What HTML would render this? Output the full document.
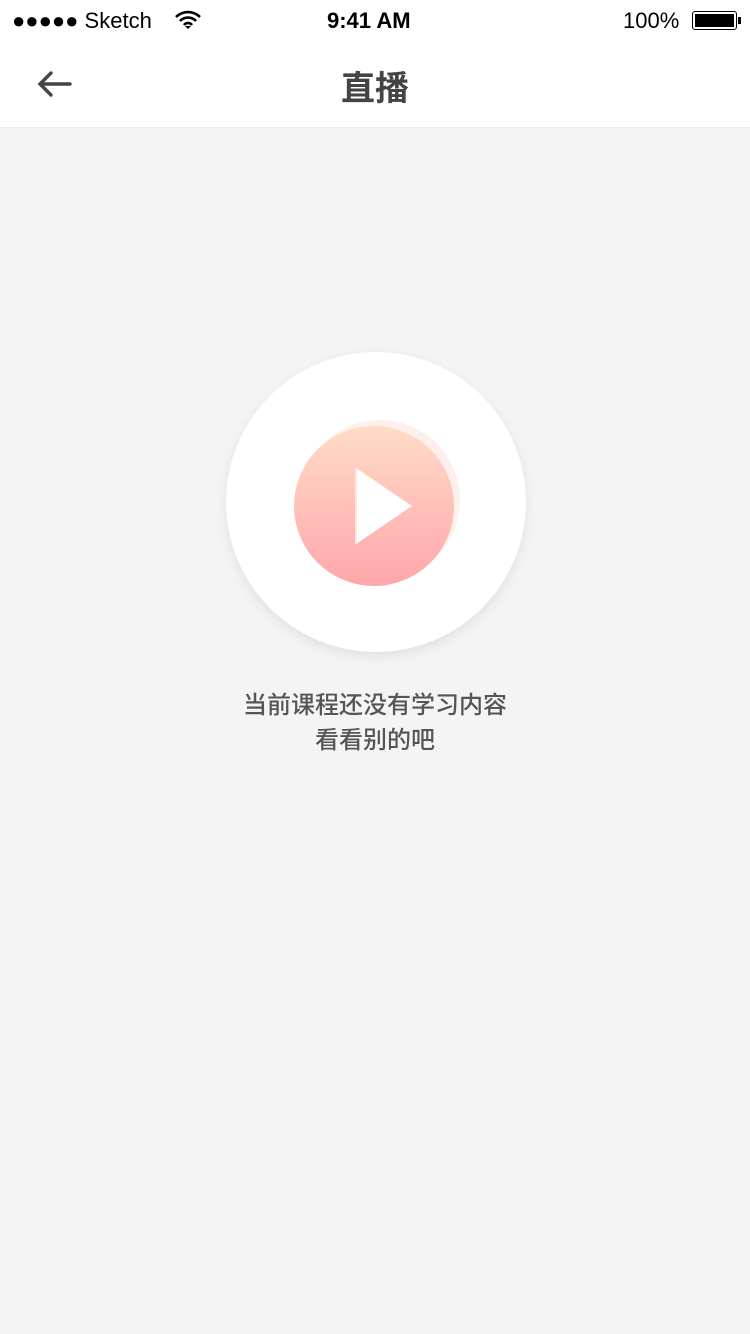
<!DOCTYPE html>
<html><head><meta charset="utf-8"><style>
*{margin:0;padding:0;box-sizing:border-box}
body{width:750px;height:1334px;background:#f4f4f4;font-family:"Liberation Sans","Noto Sans CJK SC",sans-serif;position:relative;overflow:hidden}
.top{position:absolute;left:0;top:0;width:750px;height:128px;background:#fff;border-bottom:1px solid #ececec}
.sb{position:absolute;top:8px;font-size:22px;color:#000}
.title{position:absolute;top:61px;left:0;width:750px;text-align:center;font-size:34px;color:#444;font-weight:600}
.big{position:absolute;left:226px;top:352px;width:300px;height:300px;border-radius:50%;background:#fff;box-shadow:0 4px 10px rgba(200,205,215,0.5)}
.ring{position:absolute;left:300px;top:420px;width:160px;height:160px;border-radius:50%;background:#fdf0ec}
.pb{position:absolute;left:294px;top:426px;width:160px;height:160px;border-radius:50%;background:linear-gradient(#ffdcc8,#ffa6aa)}
.txt{position:absolute;top:688px;left:0;width:750px;text-align:center;font-size:24px;color:#555;line-height:35px;font-weight:500}
</style></head><body>
<div class="top">
<div class="sb" style="left:12px">●●●●● Sketch</div>
<svg style="position:absolute;left:175px;top:10px" width="26" height="20" viewBox="0 0 26 20"><path d="M1 7a17 17 0 0 1 24 0M5 11a11 11 0 0 1 16 0M9 15a5 5 0 0 1 8 0" stroke="#000" stroke-width="2.6" fill="none"/><path d="M10 16l3 3 3-3z" fill="#000"/></svg>
<div class="sb" style="left:327px;font-weight:bold">9:41 AM</div>
<div class="sb" style="left:623px">100%</div>
<div style="position:absolute;left:692px;top:11px;width:45px;height:19px;border:1.5px solid #000;border-radius:3px;padding:2px"><div style="background:#000;width:100%;height:100%"></div></div>
<div style="position:absolute;left:738px;top:17px;width:3px;height:7px;background:#000"></div>
<svg style="position:absolute;left:36px;top:70px" width="36" height="28" viewBox="0 0 36 28"><path d="M34 14H4M15 3L4 14l11 11" stroke="#444" stroke-width="3.4" fill="none" stroke-linecap="round"/></svg>
<div class="title">直播</div>
</div>
<div class="big"></div>
<div class="ring"></div>
<div class="pb"></div>
<svg style="position:absolute;left:355px;top:467px" width="58" height="78" viewBox="0 0 58 78"><path d="M1 1L57 39 1 77z" fill="#fff"/><path d="M1 1v76" stroke="#fde6e4" stroke-width="2"/></svg>
<div class="txt">当前课程还没有学习内容<br>看看别的吧</div>
</body></html>
